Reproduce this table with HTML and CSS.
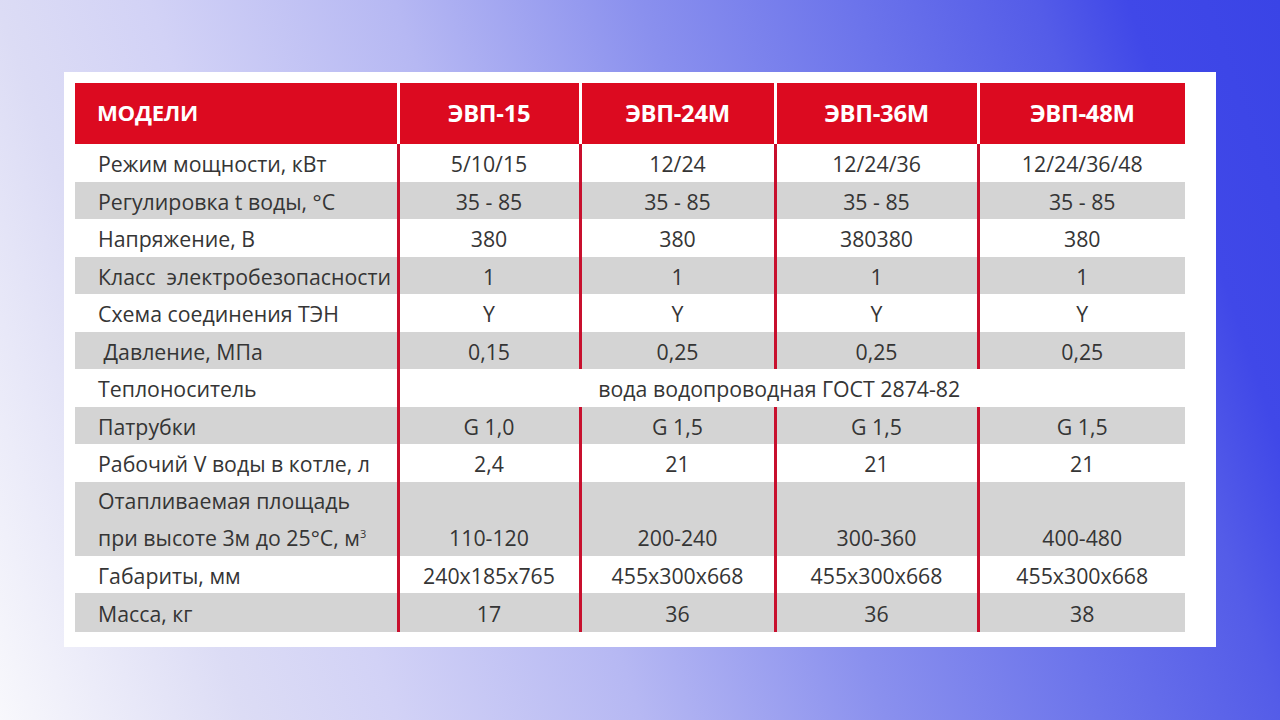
FILE: index.html
```html
<!DOCTYPE html>
<html lang="ru">
<head>
<meta charset="utf-8">
<title>ЭВП</title>
<link rel="stylesheet" href="styles.css">
</head>
<body>
<div class="stage">
  <div class="card">
    <table class="spec">
      <colgroup>
        <col class="c0"><col class="c1"><col class="c2"><col class="c3"><col class="c4">
      </colgroup>
      <thead>
        <tr class="head">
          <th class="name">МОДЕЛИ</th>
          <th>ЭВП-15</th>
          <th>ЭВП-24М</th>
          <th>ЭВП-36М</th>
          <th>ЭВП-48М</th>
        </tr>
      </thead>
      <tbody>
        <tr class="a"><td class="name">Режим мощности, кВт</td><td>5/10/15</td><td>12/24</td><td>12/24/36</td><td>12/24/36/48</td></tr>
        <tr class="g b"><td class="name">Регулировка t воды, °С</td><td>35 - 85</td><td>35 - 85</td><td>35 - 85</td><td>35 - 85</td></tr>
        <tr class="a"><td class="name">Напряжение, В</td><td>380</td><td>380</td><td>380380</td><td>380</td></tr>
        <tr class="g b"><td class="name">Класс&nbsp; электробезопасности</td><td>1</td><td>1</td><td>1</td><td>1</td></tr>
        <tr class="a"><td class="name">Схема соединения ТЭН</td><td>Y</td><td>Y</td><td>Y</td><td>Y</td></tr>
        <tr class="g b"><td class="name">&nbsp;Давление, МПа</td><td>0,15</td><td>0,25</td><td>0,25</td><td>0,25</td></tr>
        <tr class="a"><td class="name">Теплоноситель</td><td colspan="4" class="span">вода водопроводная ГОСТ 2874-82</td></tr>
        <tr class="g b"><td class="name">Патрубки</td><td>G 1,0</td><td>G 1,5</td><td>G 1,5</td><td>G 1,5</td></tr>
        <tr class="a"><td class="name">Рабочий V воды в котле, л</td><td>2,4</td><td>21</td><td>21</td><td>21</td></tr>
        <tr class="g tall"><td class="name">Отапливаемая площадь<br>при высоте 3м до 25°С, м<sup>3</sup></td><td>110-120</td><td>200-240</td><td>300-360</td><td>400-480</td></tr>
        <tr class="b"><td class="name">Габариты, мм</td><td>240x185x765</td><td>455x300x668</td><td>455x300x668</td><td>455x300x668</td></tr>
        <tr class="g c"><td class="name">Масса, кг</td><td>17</td><td>36</td><td>36</td><td>38</td></tr>
      </tbody>
    </table>
  </div>
</div>
</body>
</html>
```

FILE: styles.css
```css
* { box-sizing: border-box; }
html, body { margin: 0; padding: 0; }
body {
  width: 1280px;
  height: 720px;
  overflow: hidden;
  font-family: "Open Sans", "Noto Sans", "DejaVu Sans", sans-serif;
}
.stage {
  width: 1280px;
  height: 720px;
  padding: 72px 0 0 64px;
  background: linear-gradient(71deg,
    #f8f8fc 0%,
    #dcdcf5 16%,
    #d2d2f6 26%,
    #b6b8f3 42%,
    #8a90ee 58%,
    #6c74eb 72%,
    #545ce8 84%,
    #4048e8 90%,
    #3a44e6 100%);
}
.card {
  width: 1152px;
  height: 575px;
  background: #ffffff;
  padding: 11px 31px 14px 11px;
}
.spec {
  width: 1110px;
  border-collapse: collapse;
  border-spacing: 0;
  table-layout: fixed;
  color: #353535;
  font-size: 21.3px;
}
.c0 { width: 323px; }
.c1 { width: 182px; }
.c2 { width: 195px; }
.c3 { width: 203px; }
.c4 { width: 207px; }

.head th {
  height: 61px;
  background: #dc0a20;
  color: #ffffff;
  font-weight: 700;
  font-size: 23.8px;
  letter-spacing: -0.3px;
  text-align: center;
  padding: 0 0 2px 0;
  border-left: 3px solid #ffffff;
}
.head th.name {
  text-align: left;
  padding-left: 22px;
  font-size: 22.2px;
  border-left: none;
}
.spec td {
  padding: 2px 0 0 0;
  line-height: 34px;
  text-align: center;
  vertical-align: middle;
  white-space: nowrap;
  border-left: 3px solid #c8102e;
}
.spec tr.a td { height: 38px; }
.spec tr.b td { height: 37px; }
.spec tr.c td { height: 39px; }
.spec td.name {
  text-align: left;
  padding-left: 23px;
  border-left: none;
}
.spec td.span {
  padding-right: 26px;
}
.spec tr.g td { background: #d4d4d4; }
.spec tr.tall td {
  height: 74px;
  line-height: 37px;
  padding-top: 0;
  vertical-align: bottom;
}
sup {
  font-size: 11px;
  line-height: 0;
  vertical-align: 8px;
}
```
